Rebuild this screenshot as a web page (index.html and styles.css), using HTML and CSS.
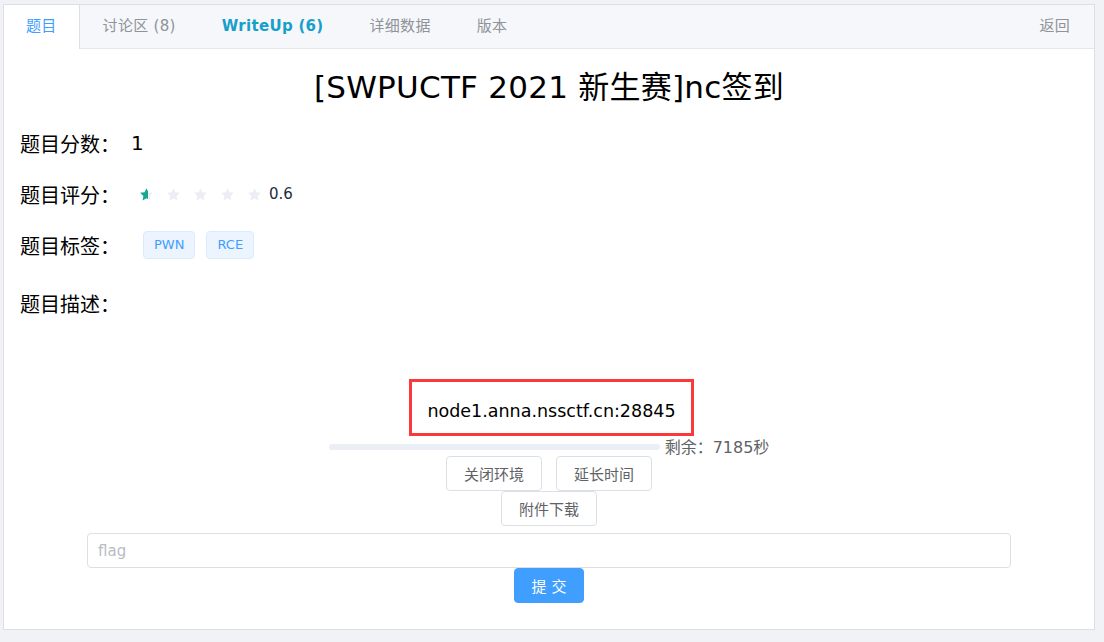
FILE: index.html
```html
<!DOCTYPE html>
<html lang="zh-CN">
<head>
<meta charset="utf-8">
<title>[SWPUCTF 2021 新生赛]nc签到</title>
<link rel="stylesheet" href="styles.css">
</head>
<body>
<div class="page">
  <div class="card">
    <div class="tabs">
      <div class="tab active">题目</div>
      <div class="tab">讨论区 (8)</div>
      <div class="tab wu">WriteUp (6)</div>
      <div class="tab">详细数据</div>
      <div class="tab">版本</div>
      <div class="spacer"></div>
      <div class="tab back">返回</div>
    </div>
    <div class="content">
      <h1 class="title">[SWPUCTF 2021 新生赛]nc签到</h1>
      <div class="row"><span class="label">题目分数：</span><span class="score">1</span></div>
      <div class="row">
        <span class="label">题目评分：</span>
        <div class="stars">
          <svg class="star" viewBox="0 0 24 24"><defs><linearGradient id="half"><stop offset="62%" stop-color="#13a88f"/><stop offset="62%" stop-color="#eceef3"/></linearGradient></defs><path fill="url(#half)" d="M12 1.8l3.1 6.6 7.2.9-5.3 5 1.4 7.1L12 17.9l-6.4 3.5 1.4-7.1-5.3-5 7.2-.9z"/></svg>
          <svg class="star" viewBox="0 0 24 24"><path fill="#eceef3" d="M12 1.8l3.1 6.6 7.2.9-5.3 5 1.4 7.1L12 17.9l-6.4 3.5 1.4-7.1-5.3-5 7.2-.9z"/></svg>
          <svg class="star" viewBox="0 0 24 24"><path fill="#eceef3" d="M12 1.8l3.1 6.6 7.2.9-5.3 5 1.4 7.1L12 17.9l-6.4 3.5 1.4-7.1-5.3-5 7.2-.9z"/></svg>
          <svg class="star" viewBox="0 0 24 24"><path fill="#eceef3" d="M12 1.8l3.1 6.6 7.2.9-5.3 5 1.4 7.1L12 17.9l-6.4 3.5 1.4-7.1-5.3-5 7.2-.9z"/></svg>
          <svg class="star" viewBox="0 0 24 24"><path fill="#eceef3" d="M12 1.8l3.1 6.6 7.2.9-5.3 5 1.4 7.1L12 17.9l-6.4 3.5 1.4-7.1-5.3-5 7.2-.9z"/></svg>
        </div>
        <span class="rate-text">0.6</span>
      </div>
      <div class="row row-tags">
        <span class="label">题目标签：</span>
        <div class="tags"><span class="tag">PWN</span><span class="tag">RCE</span></div>
      </div>
      <div class="row"><span class="label">题目描述：</span></div>
      <div class="desc">
        <div class="addr">node1.anna.nssctf.cn:28845</div>
      </div>
      <div class="timer">
        <div class="bar"></div>
        <span class="remain">剩余：7185秒</span>
      </div>
      <div class="btns">
        <button class="btn">关闭环境</button>
        <button class="btn">延长时间</button>
      </div>
      <div class="btns second">
        <button class="btn">附件下载</button>
      </div>
      <input class="flag" type="text" placeholder="flag">
      <div class="submit-row"><button class="submit">提 交</button></div>
    </div>
  </div>
</div>
</body>
</html>
```
FILE: styles.css
```css
html, body {
  margin: 0;
  background: #f0f2f5;
  font-family: "DejaVu Sans", "Noto Sans CJK SC", sans-serif;
}
.page {
  padding: 4px 9px 0 3px;
}
.card {
  background: #fff;
  border: 1px solid #dcdfe6;
}
.tabs {
  display: flex;
  height: 43px;
  background: #f5f7fa;
  border-bottom: 1px solid #e4e7ed;
}
.tab {
  padding: 0 23px 0 22px;
  line-height: 43px;
  font-size: 15px;
  letter-spacing: 0.3px;
  color: #909399;
  border-left: 1px solid transparent;
  border-right: 1px solid transparent;
  margin-left: -1px;
  white-space: nowrap;
}
.tab.active {
  color: #409eff;
  background: #fff;
  border-color: #dcdfe6;
  height: 44px;
  padding-right: 22px;
}
.tab.active + .tab {
  padding-left: 23px;
}
.tab.wu {
  font-weight: bold;
  color: #179fcb;
}
.spacer {
  flex: 1;
}
.content {
  padding: 0 16px 26px;
}
.title {
  margin: 18px 0 21px;
  font-size: 31px;
  letter-spacing: 0.25px;
  line-height: 40px;
  font-weight: normal;
  text-align: center;
  color: #000;
}
.row {
  display: flex;
  align-items: center;
  height: 30px;
  margin-bottom: 21px;
  font-size: 20px;
  color: #000;
}
.row-tags {
  margin-bottom: 28px;
}
.score {
  margin-left: 11px;
}
.stars {
  display: flex;
  gap: 12px;
  margin-left: 19px;
}
.star {
  width: 15px;
  height: 15px;
}
.rate-text {
  margin-left: 7px;
  font-size: 15px;
  color: #1f2d3d;
}
.tags {
  display: flex;
  gap: 11px;
  margin-left: 23px;
}
.tag {
  height: 26px;
  line-height: 26px;
  padding: 0 10px;
  font-size: 13px;
  color: #409eff;
  background: #ecf5ff;
  border: 1px solid #d9ecff;
  border-radius: 4px;
}
.desc {
  margin-top: 61px;
  text-align: center;
}
.addr {
  display: inline-block;
  margin-left: 5px;
  padding: 18px 15px 10px;
  border: 3px solid #fa3a3a;
  font-size: 17.5px;
  line-height: 23px;
  color: #000;
}
.timer {
  display: flex;
  justify-content: center;
  align-items: center;
  gap: 5px;
  height: 20px;
}
.bar {
  width: 331px;
  height: 6px;
  border-radius: 3px;
  background: #ebeef5;
  margin-top: 2px;
}
.remain {
  font-size: 16px;
  color: #606266;
}
.btns {
  display: flex;
  justify-content: center;
  gap: 14px;
}
.btn {
  height: 35px;
  padding: 0 17px;
  font-family: "DejaVu Sans", "Noto Sans CJK SC", sans-serif;
  font-size: 15px;
  color: #606266;
  background: #fff;
  border: 1px solid #dcdfe6;
  border-radius: 4px;
}
.flag {
  display: block;
  box-sizing: border-box;
  width: 924px;
  height: 35px;
  margin: 7px auto 0;
  padding: 0 10px;
  font-family: "DejaVu Sans", "Noto Sans CJK SC", sans-serif;
  font-size: 15px;
  color: #606266;
  border: 1px solid #dcdfe6;
  border-radius: 4px;
  outline: none;
}
.flag::placeholder {
  color: #b8bcc4;
}
.submit-row {
  display: flex;
  justify-content: center;
}
.submit {
  width: 70px;
  height: 35px;
  padding: 0;
  font-family: "DejaVu Sans", "Noto Sans CJK SC", sans-serif;
  font-size: 15px;
  color: #fff;
  background: #409eff;
  border: 1px solid #409eff;
  border-radius: 4px;
}
```
